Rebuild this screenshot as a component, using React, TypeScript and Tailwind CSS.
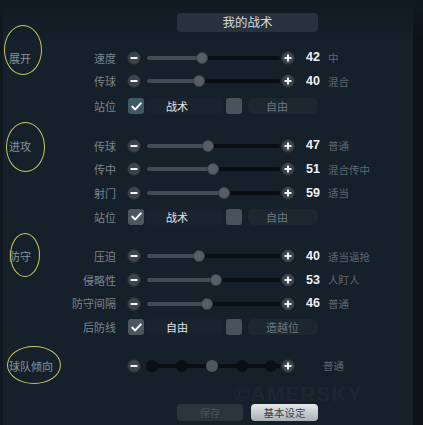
import React from "react";

const font = { fontFamily: '"Noto Sans CJK SC", "Noto Sans", sans-serif' };

function RoundBtn({ kind, className = "" }: { kind: "minus" | "plus"; className?: string }) {
  return (
    <div
      className={`flex h-[14px] w-[14px] shrink-0 items-center justify-center rounded-full border border-[#22282e] bg-[#3c434a] ${className}`}
    >
      <svg width="8" height="8" viewBox="0 0 8 8">
        <rect x="0.5" y="3" width="7" height="2" fill="#f2f4f5" />
        {kind === "plus" && <rect x="3" y="0.5" width="2" height="7" fill="#f2f4f5" />}
      </svg>
    </div>
  );
}

function SliderRow({ label, value, desc }: { label: string; value: number; desc: string }) {
  const pos = value * 1.3;
  return (
    <div className="flex h-[23.67px] items-center">
      <div className="w-[46px] whitespace-nowrap text-right text-[11px] text-[#7b848d]">{label}</div>
      <RoundBtn kind="minus" className="ml-[11px]" />
      <div className="relative ml-[6px] h-[4px] w-[133px] rounded-full bg-[#090e13]">
        <div className="h-full rounded-full bg-[#444c55]" style={{ width: pos }} />
        <div
          className="absolute top-1/2 h-[12px] w-[12px] -translate-x-1/2 -translate-y-1/2 rounded-full border border-[#3a4047] bg-[#575e66]"
          style={{ left: pos }}
        />
      </div>
      <RoundBtn kind="plus" className="ml-[1px]" />
      <div
        className="ml-[11px] w-[22px] text-[12.5px] font-bold text-[#eef0f2]"
        style={{ fontFamily: '"Liberation Sans", Arial, sans-serif' }}
      >
        {value}
      </div>
      <div className="whitespace-nowrap text-[10.5px] text-[#5f6870]">{desc}</div>
    </div>
  );
}

function Check({ checked, teal }: { checked: boolean; teal?: boolean }) {
  return (
    <div
      className={`flex h-[16px] w-[16px] shrink-0 items-center justify-center rounded-[3px] ${
        checked ? (teal ? "bg-[#3e5866]" : "bg-[#4a5660]") : "bg-[#4a525b]"
      }`}
    >
      {checked && (
        <svg width="11" height="9" viewBox="0 0 11 9">
          <path d="M1.2 4.6 L4.2 7.4 L9.8 1.4" fill="none" stroke="#f4f6f7" strokeWidth="2" strokeLinecap="round" strokeLinejoin="round" />
        </svg>
      )}
    </div>
  );
}

function ChoiceRow({
  label,
  a,
  b,
  teal,
}: {
  label: string;
  a: string;
  b: string;
  teal?: boolean;
}) {
  return (
    <div className="flex h-[23.67px] items-center">
      <div className="w-[46px] whitespace-nowrap text-right text-[11px] text-[#7b848d]">{label}</div>
      <div className="ml-[12px]">
        <Check checked teal={teal} />
      </div>
      <div className="ml-[3px] flex h-[16px] w-[76px] items-center rounded-[4px] bg-white/[0.015] pl-[19px] text-[11px] text-[#e2e5e8]">
        {a}
      </div>
      <div className="ml-[3px]">
        <Check checked={false} />
      </div>
      <div className="ml-[6px] flex h-[16px] w-[70px] items-center rounded-[6px] bg-white/[0.03] pl-[18px] text-[11px] text-[#6f7880]">
        {b}
      </div>
    </div>
  );
}

function SectionLabel({
  text,
  ellipse,
}: {
  text: string;
  ellipse: string;
}) {
  return (
    <div className="relative h-[23.67px] w-[70px] shrink-0">
      <div className="flex h-full items-center whitespace-nowrap pl-[9px] text-[11px] text-[#8c949b]">{text}</div>
      <div className={`pointer-events-none absolute rounded-[50%] border-[1.5px] border-[#c9c95c] ${ellipse}`} />
    </div>
  );
}

function TendencyRow() {
  const dots = [5, 35, 65, 95, 124];
  return (
    <div className="flex h-[23.67px] items-center">
      <div className="w-[46px]" />
      <RoundBtn kind="minus" className="ml-[11px]" />
      <div className="relative ml-[6px] h-[4px] w-[133px] bg-[#0a0f14]">
        {dots.map((d, i) => (
          <div
            key={d}
            className={`absolute top-1/2 h-[12px] w-[12px] -translate-x-1/2 -translate-y-1/2 rounded-full ${
              i === 2 ? "bg-[#4d555e]" : "bg-[#0a0f14]"
            }`}
            style={{ left: d }}
          />
        ))}
      </div>
      <RoundBtn kind="plus" className="ml-[1px]" />
      <div className="ml-[28px] whitespace-nowrap text-[10.5px] text-[#5f6870]">普通</div>
    </div>
  );
}

export default function App() {
  return (
    <div className="relative h-[425px] w-[423px] overflow-hidden bg-[#16202a]" style={font}>
      <div className="absolute inset-y-0 right-0 w-[10px] bg-[#0c1218]" />
      <div className="absolute inset-y-0 left-0 w-[3px] bg-[#10171e]" />
      <div className="absolute inset-x-0 top-0 h-[40px] bg-gradient-to-b from-[#111a22] to-transparent" />

      <div
        className="pointer-events-none absolute left-[234px] top-[383px] whitespace-nowrap text-[21px] font-bold leading-none tracking-[1px] text-white/[0.045]"
        style={{ fontFamily: '"Liberation Sans", Arial, sans-serif' }}
      >
        ©AMERSKY
      </div>

      <div className="relative flex flex-col pt-[13px]">
        <div className="ml-[177px] flex h-[19px] w-[141px] items-center justify-center rounded-[4px] bg-[#28323c] text-[12.5px] text-[#d6dadf]">
          我的战术
        </div>

        {/* 展开 */}
        <div className="mt-[14px] flex">
          <SectionLabel text="展开" ellipse="left-[4px] top-[-21px] h-[50px] w-[38px]" />
          <div className="flex flex-col">
            <SliderRow label="速度" value={42} desc="中" />
            <SliderRow label="传球" value={40} desc="混合" />
            <div className="mt-[1px]">
              <ChoiceRow label="站位" a="战术" b="自由" teal />
            </div>
          </div>
        </div>

        {/* 进攻 */}
        <div className="mt-[16px] flex">
          <SectionLabel text="进攻" ellipse="left-[6px] top-[-12px] h-[50px] w-[39px]" />
          <div className="flex flex-col">
            <SliderRow label="传球" value={47} desc="普通" />
            <SliderRow label="传中" value={51} desc="混合传中" />
            <SliderRow label="射门" value={59} desc="适当" />
            <ChoiceRow label="站位" a="战术" b="自由" />
          </div>
        </div>

        {/* 防守 */}
        <div className="mt-[16px] flex">
          <SectionLabel text="防守" ellipse="left-[10px] top-[-12px] h-[44px] w-[30px]" />
          <div className="flex flex-col">
            <SliderRow label="压迫" value={40} desc="适当逼抢" />
            <SliderRow label="侵略性" value={53} desc="人盯人" />
            <SliderRow label="防守间隔" value={46} desc="普通" />
            <ChoiceRow label="后防线" a="自由" b="造越位" />
          </div>
        </div>

        {/* 球队倾向 */}
        <div className="mt-[15px] flex">
          <SectionLabel text="球队倾向" ellipse="left-[7px] top-[-8px] h-[38px] w-[54px]" />
          <TendencyRow />
        </div>

        <div className="ml-[177px] mt-[26px] flex w-[141px] gap-[8px]">
          <div className="flex h-[17px] w-[66px] items-center justify-center rounded-[4px] bg-[#2b343d] text-[10.5px] text-[#4a535b]">
            保存
          </div>
          <div className="flex h-[17px] w-[67px] items-center justify-center rounded-[4px] bg-gradient-to-b from-[#e6e9eb] to-[#aab0b5] text-[10.5px] text-[#3a3f44]">
            基本设定
          </div>
        </div>
      </div>
    </div>
  );
}
